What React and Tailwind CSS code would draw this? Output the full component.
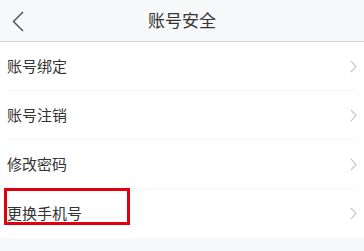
import React from "react";

const items = ["账号绑定", "账号注销", "修改密码", "更换手机号"];

function Chevron() {
  return (
    <svg width="7" height="13" viewBox="0 0 7 13" fill="none">
      <path d="M0.8 0.8 L6 6.5 L0.8 12.2" stroke="#c0c0c0" strokeWidth="1.1" />
    </svg>
  );
}

export default function App() {
  return (
    <div
      className="relative min-h-screen w-full bg-[#f7f8fa] text-[#333]"
      style={{ fontFamily: '"Noto Sans", "Noto Sans CJK SC", sans-serif' }}
    >
      <div className="relative flex h-[42px] items-center justify-center border-b border-[#d4d4d4] bg-[#f7f8fa]">
        <div className="absolute left-[12px] top-[11px]">
          <svg width="12" height="21" viewBox="0 0 12 21" fill="none">
            <path d="M11 1 L1.5 10.5 L11 20" stroke="#555" strokeWidth="1.5" />
          </svg>
        </div>
        <span className="text-[17px] leading-none text-[#333]">账号安全</span>
      </div>
      <div className="bg-white">
        {items.map((t, i) => (
          <div key={t} className="pl-[7px] pr-[7px]">
            <div
              className={
                "flex h-[49px] items-center justify-between " +
                (i < items.length - 1 ? "border-b border-[#f5f5f5]" : "")
              }
            >
              <span className="text-[15px] leading-none text-[#333]">{t}</span>
              <Chevron />
            </div>
          </div>
        ))}
      </div>
      <div className="pointer-events-none absolute left-[4px] top-[188px] h-[37px] w-[126px] border-[3px] border-[#e00010]" />
    </div>
  );
}
